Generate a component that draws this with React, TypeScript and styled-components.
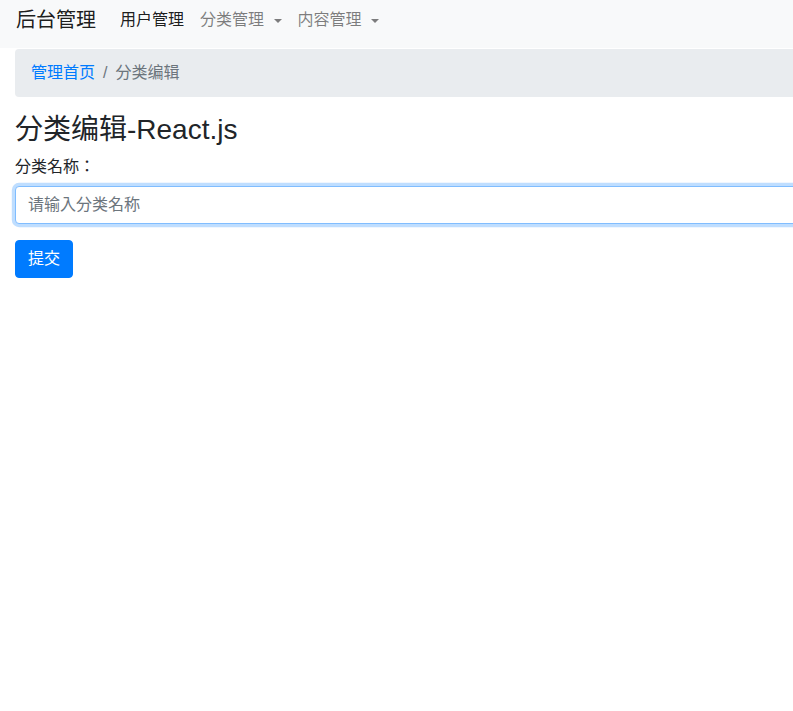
import React from "react";
import styled, { createGlobalStyle } from "styled-components";

const Global = createGlobalStyle`
  html, body { margin: 0; padding: 0; overflow: hidden; background: #fff; }
  body {
    font-family: "Liberation Sans", "Noto Sans CJK JP", sans-serif;
    font-size: 16px;
    line-height: 1.5;
    color: #212529;
  }
  * { box-sizing: border-box; }
`;

const Navbar = styled.nav`
  display: flex;
  align-items: flex-start;
  height: 48px;
  padding: 5px 16px 0;
  background: #f8f9fa;
`;

const Brand = styled.a`
  font-size: 20px;
  line-height: 30px;
  color: rgba(0, 0, 0, 0.9);
  margin-right: 16px;
  text-decoration: none;
`;

const NavList = styled.div`
  display: flex;
  align-items: center;
  height: 30px;
`;

const NavLink = styled.a<{ $active?: boolean }>`
  display: flex;
  align-items: center;
  padding: 0 8px;
  line-height: 24px;
  color: ${(p) => (p.$active ? "rgba(0,0,0,0.9)" : "rgba(0,0,0,0.5)")};
  text-decoration: none;
`;

const Caret = styled.span`
  display: inline-block;
  margin-left: 9.5px;
  width: 0;
  height: 0;
  border-top: 4.8px solid currentColor;
  border-left: 4.8px solid transparent;
  border-right: 4.8px solid transparent;
  margin-top: 1px;
`;

const Container = styled.div`
  padding: 1px 0 0 15px;
  width: 1000px;
`;

const Breadcrumb = styled.ol`
  display: flex;
  list-style: none;
  margin: 0 0 16px;
  padding: 12px 16px;
  background: #e9ecef;
  border-radius: 4px;
  line-height: 24px;
`;

const Crumb = styled.li<{ $active?: boolean }>`
  color: ${(p) => (p.$active ? "#6c757d" : "#007bff")};
`;

const Separator = styled.li`
  padding: 0 8px;
  color: #6c757d;
`;

const Title = styled.h3`
  margin: 0 0 8px;
  font-size: 28px;
  font-weight: 400;
  line-height: 1.2;
`;

const FormGroup = styled.div`
  margin-bottom: 16px;
`;

const Label = styled.label`
  display: block;
  margin-bottom: 7px;
  line-height: 24px;
`;

const Input = styled.input`
  display: block;
  width: 100%;
  height: 38px;
  padding: 6px 12px;
  font: inherit;
  color: #495057;
  background: #fff;
  border: 1px solid #80bdff;
  border-radius: 4px;
  outline: 0;
  box-shadow: 0 0 0 3.2px rgba(0, 123, 255, 0.25);
  &::placeholder { color: #6c757d; opacity: 1; }
`;

const Button = styled.button`
  display: inline-block;
  padding: 6px 12px;
  font: inherit;
  line-height: 24px;
  color: #fff;
  background: #007bff;
  border: 1px solid #007bff;
  border-radius: 4px;
  cursor: pointer;
`;

export default function App() {
  return (
    <>
      <Global />
      <Navbar>
        <Brand href="#">后台管理</Brand>
        <NavList>
          <NavLink $active href="#">用户管理</NavLink>
          <NavLink href="#">
            分类管理
            <Caret />
          </NavLink>
          <NavLink href="#">
            内容管理
            <Caret />
          </NavLink>
        </NavList>
      </Navbar>
      <Container>
        <Breadcrumb>
          <Crumb>管理首页</Crumb>
          <Separator aria-hidden>/</Separator>
          <Crumb $active>分类编辑</Crumb>
        </Breadcrumb>
        <Title>分类编辑-React.js</Title>
        <FormGroup>
          <Label>分类名称：</Label>
          <Input placeholder="请输入分类名称" />
        </FormGroup>
        <Button>提交</Button>
      </Container>
    </>
  );
}
